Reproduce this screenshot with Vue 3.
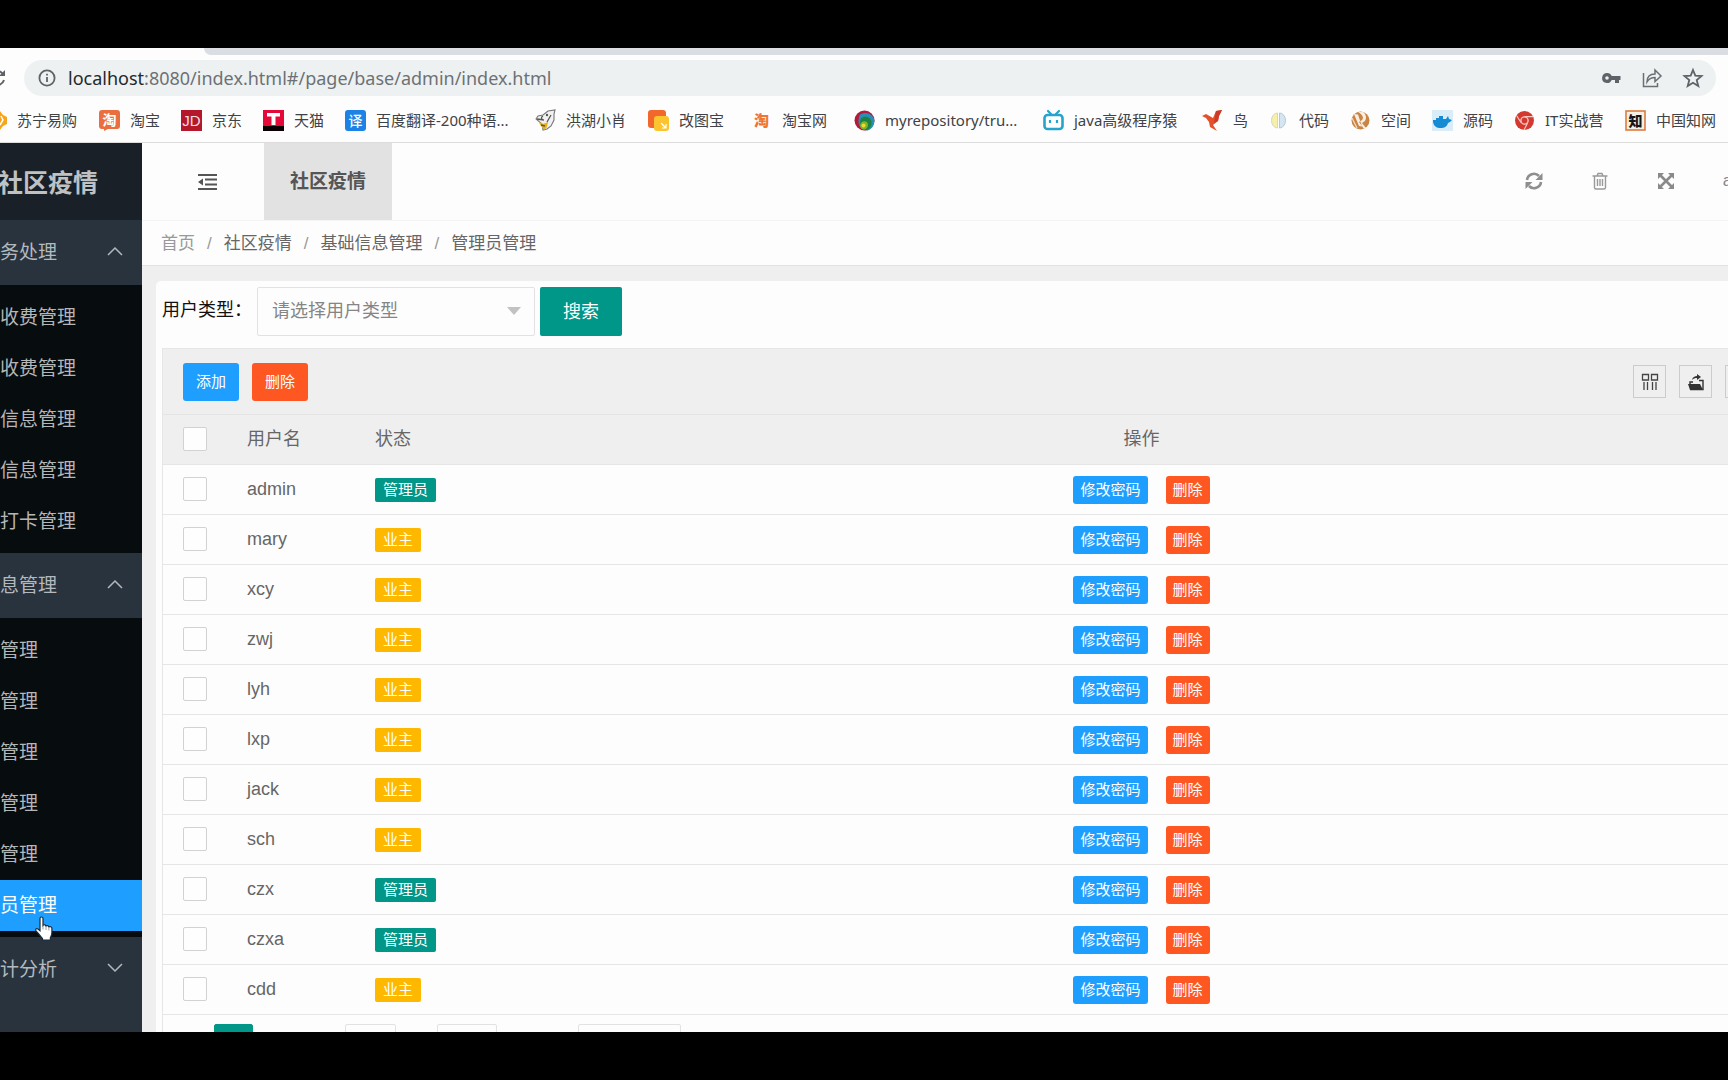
<script setup>
import { ref } from 'vue'

const cjk = 'font-family="Noto Sans CJK SC, sans-serif" text-anchor="middle"'
const latin = 'font-family="Liberation Sans, sans-serif" text-anchor="middle"'

const bookmarks = [
  {
    name: '苏宁易购',
    icon: '<path d="M10 4l4-3 3 4 4 2v7l-4 2-3 4-5-3z" fill="#f9a51a"/><path d="M15 6l2 4-3 5" fill="none" stroke="#fff" stroke-width="1.500"/>'
  },
  {
    name: '淘宝',
    icon: `<path d="M3 0h15a3 3 0 0 1 3 3v13a3 3 0 0 1-3 3h-9l-4 2v-2h-2a3 3 0 0 1-3-3v-13a3 3 0 0 1 3-3z" fill="#ea6f40"/><text x="10.5" y="14.500" font-size="14" font-weight="700" fill="#fff" ${cjk}>淘</text>`
  },
  {
    name: '京东',
    icon: `<rect width="21" height="21" fill="#b5172b"/><text x="10.5" y="16" font-size="15" fill="#f6dfe0" ${latin}>JD</text>`
  },
  {
    name: '天猫',
    icon: `<rect width="21" height="21" fill="#e5093a"/><rect y="16" width="21" height="5" fill="#0a0003"/><path d="M4 3h13v3.500h-4.500v8.500h-4v-8.500h-4.500z" fill="#fff"/>`
  },
  {
    name: '百度翻译-200种语...',
    icon: `<rect width="21" height="21" rx="3" fill="#1c82e6"/><text x="10.5" y="15.500" font-size="14" font-weight="500" fill="#fff" ${cjk}>译</text>`
  },
  {
    name: '洪湖小肖',
    icon: '<path d="M1 9l2-3 5-1 5-4 7-1-1 4v6l-3 6-4 3-4 1-1-6z" fill="#f1f1f1" stroke="#777" stroke-width="1.100"/><path d="M3 11l5 3 5-2-1 5-3 3-3-4z" fill="#e8b01c"/><path d="M2 9l7 1M8 6c-2 1-2 3 0 4M12 12l4-7M6 15l4 1" fill="none" stroke="#555" stroke-width="1.300"/><circle cx="12" cy="5" r="1.200" fill="#555"/>'
  },
  {
    name: '改图宝',
    icon: '<rect width="18" height="18" rx="3" fill="#f2672c"/><rect x="6" y="6" width="15" height="15" rx="3" fill="#fcc52f"/><path d="M13 13l5 5m0-4v4h-4" fill="none" stroke="#fff" stroke-width="1.200"/>'
  },
  {
    name: '淘宝网',
    icon: `<text x="10.5" y="15.500" font-size="15" font-weight="900" fill="#ee7630" ${cjk}>淘</text>`
  },
  {
    name: 'myrepository/tru...',
    icon: '<circle cx="10.5" cy="10.5" r="10" fill="#b8173c"/><path d="M6 4.500c6-4 14 0 14.500 6.500-.5 5-3 8.500-7 9.500-5 0-9-4-9-9 0-3 .5-5 1.500-7z" fill="#2590b8"/><path d="M7 8.500c4-4 11-1 10.500 4.500-.3 4-3 7-6 7.200-4-1-7-7-4.500-11.700z" fill="#1f8040"/><path d="M7 13c2-3 7-2 7 1.500s-2 5-4.500 5-4.500-3-2.500-6.500z" fill="#7fb52a"/><circle cx="9.500" cy="15.500" r="2" fill="#e5dc38"/>'
  },
  {
    name: 'java高级程序猿',
    icon: '<rect x="1.500" y="5" width="18" height="14" rx="3" fill="#fff" stroke="#25a4cc" stroke-width="2.600"/><path d="M5 1l3 3M16 1l-3 3" stroke="#25a4cc" stroke-width="2.200" stroke-linecap="round"/><path d="M7 10v3M14 10v3" stroke="#25a4cc" stroke-width="2.200"/>'
  },
  {
    name: '鸟',
    icon: '<path d="M0 6l4-2 7 4 3-7 6-1-3 6-1 5-5 4 4 6-7-4-1-5-3-4z" fill="#e4502c"/><path d="M14 1l6-1-3 6-1 5-4 2z" fill="#cc3a28"/>'
  },
  {
    name: '代码',
    icon: '<path d="M9.500 3a6 7.500 0 0 0 0 15z" fill="#f7f0a8" stroke="#d7d7bb"/><path d="M11.500 3a6 7.500 0 0 1 0 15z" fill="#d5e6f3" stroke="#b8c6cf"/>'
  },
  {
    name: '空间',
    icon: '<circle cx="10.5" cy="10.5" r="9" fill="#c98446"/><path d="M4 4l5 12 3 .500-4-12zM8 2h5c3 2 4 6 2 9l-3 2 4 5-2 1-5-7 3-2c2-2 1-5-4-8z" fill="#f9eee1"/><path d="M2 8l5 10" stroke="#f0dcc4" stroke-width="1.200"/>'
  },
  {
    name: '源码',
    icon: '<rect width="21" height="21" fill="#d9edf8"/><path d="M1 10h3V8h3V6h4v3h3l2-3 1 3 3 1-2 2-2 1c-1 4-4 5-7 5-5 0-7-2-8-6z" fill="#148bd2"/>'
  },
  {
    name: 'IT实战营',
    icon: '<circle cx="10.5" cy="10.5" r="9.500" fill="#d4392f"/><circle cx="10.5" cy="10.5" r="3.600" fill="#d4392f" stroke="#f3c9c4" stroke-width="1.400"/><path d="M10.500 6.700h8.500M7 12.500l-4.500-7M13.500 13l-3.500 7" stroke="#f3c9c4" stroke-width="1.200"/>'
  },
  {
    name: '中国知网',
    icon: `<rect x="1" y="1" width="19" height="19" fill="#f5efe6" stroke="#dc7c3e" stroke-width="1.600"/><text x="10.5" y="15.500" font-size="14" font-weight="900" fill="#161616" ${cjk}>知</text>`
  }
]

const groups = [
  {
    title: '务处理',
    open: true,
    items: ['收费管理', '收费管理', '信息管理', '信息管理', '打卡管理']
  },
  {
    title: '息管理',
    open: true,
    items: ['管理', '管理', '管理', '管理', '管理', '员管理']
  },
  { title: '计分析', open: false, items: [] }
]
const active = '员管理'

const crumbs = ['首页', '社区疫情', '基础信息管理', '管理员管理']

const userType = ref('')
const users = ref([
  { name: 'admin', admin: true },
  { name: 'mary', admin: false },
  { name: 'xcy', admin: false },
  { name: 'zwj', admin: false },
  { name: 'lyh', admin: false },
  { name: 'lxp', admin: false },
  { name: 'jack', admin: false },
  { name: 'sch', admin: false },
  { name: 'czx', admin: true },
  { name: 'czxa', admin: true },
  { name: 'cdd', admin: false }
])
</script>

<template>
  <div class="screen">
    <header class="browser">
      <div class="tabstrip"></div>
      <div class="toolbar">
        <button class="icon-btn reload" aria-label="重新加载">
          <svg width="18" height="18" viewBox="0 0 18 18" fill="none" stroke="#5f6368" stroke-width="2">
            <path d="M15 5a7 7 0 1 0 1 6" />
            <path d="M17 1v6h-6z" fill="#5f6368" stroke="none" />
          </svg>
        </button>
        <div class="address">
          <svg width="18" height="18" viewBox="0 0 18 18" fill="none" stroke="#5f6368" stroke-width="1.8">
            <circle cx="9" cy="9" r="7.600" />
            <path d="M9 8v5M9 4.800v1.800" />
          </svg>
          <span class="url"><b>localhost</b>:8080/index.html#/page/base/admin/index.html</span>
          <button class="icon-btn" aria-label="密码">
            <svg width="20" height="20" viewBox="0 0 20 20">
              <path
                d="M6 5a5 5 0 1 0 4.700 7h3.300v3h4v-3h1.500V8H10.700A5 5 0 0 0 6 5zm0 3.200a1.800 1.800 0 1 1 0 3.600 1.800 1.800 0 0 1 0-3.600z"
                fill="#5f6368"
                fill-rule="evenodd"
              />
            </svg>
          </button>
          <button class="icon-btn" aria-label="分享">
            <svg width="20" height="20" viewBox="0 0 20 20" fill="none" stroke="#6b6f73" stroke-width="1.500">
              <path d="M1.500 5v13.500h14V15" />
              <path d="M5 14c0-5 3-8 8-8V2l6 6-6 5.500v-4c-4 0-6 1-8 4.500z" />
            </svg>
          </button>
          <button class="icon-btn" aria-label="收藏">
            <svg width="20" height="20" viewBox="0 0 20 20" fill="none" stroke="#5f6368" stroke-width="1.800">
              <path d="M10 2l2.300 5.700 6.200.4-4.800 3.900 1.600 6L10 14.700 4.700 18l1.600-6L1.500 8.100l6.200-.4z" />
            </svg>
          </button>
        </div>
      </div>
      <nav class="bookmarks">
        <a v-for="b in bookmarks" :key="b.name" href="#">
          <svg width="21" height="21" viewBox="0 0 21 21" v-html="b.icon"></svg>
          <span>{{ b.name }}</span>
        </a>
      </nav>
    </header>

    <div class="app">
      <aside class="sidebar">
        <h1 class="logo">社区疫情</h1>
        <section v-for="g in groups" :key="g.title">
          <button class="group">
            <span>{{ g.title }}</span>
            <svg width="16" height="10" viewBox="0 0 16 10" fill="none" stroke="#b4b9be" stroke-width="1.500">
              <path :d="g.open ? 'M1 9l7-7 7 7' : 'M1 1l7 7 7-7'" />
            </svg>
          </button>
          <ul v-if="g.open">
            <li v-for="(item, i) in g.items" :key="i">
              <a href="#" :class="{ active: item === active }">{{ item }}</a>
            </li>
          </ul>
        </section>
        <svg class="pointer" width="20" height="25" viewBox="0 0 20 25">
          <path
            d="M6 2.500c0-2 3-2 3 0v7c1-1.300 2.700-.7 3 .5 1-.9 2.600-.3 2.900.9 1.200-.7 3-.1 3 1.700v4.500c0 2-.8 3-1.500 4.400V24H8.500v-1.500c-1.500-1.800-4-5-6.500-7.500-1.200-1.500.3-3 2-2l2 1.700z"
            fill="#fff"
            stroke="#1a2a38"
            stroke-width="1.200"
          />
          <path d="M9 9.500v4M12 10.500v3.500M14.900 11.500v3" stroke="#888" stroke-width=".8" />
        </svg>
      </aside>

      <main class="main">
        <div class="topbar">
          <button class="icon-btn fold" aria-label="收起菜单">
            <svg width="20" height="18" viewBox="0 0 20 18" fill="#555">
              <path d="M1 1h19v2H1zM8 5.500h12v2H8zM8 10.500h12v2H8zM1 15h19v2H1zM6 5.500v7L1 9z" />
            </svg>
          </button>
          <a class="module" href="#">社区疫情</a>
          <div class="actions">
            <button class="icon-btn" aria-label="刷新">
              <svg width="18" height="18" viewBox="0 0 18 18" fill="none" stroke="#8e8e8e" stroke-width="2.600">
                <path d="M2 8a7 7 0 0 1 12-4M16 10a7 7 0 0 1-12 4" />
                <path d="M17.500 1v7h-7zM.5 17v-7h7z" fill="#8e8e8e" stroke="none" />
              </svg>
            </button>
            <button class="icon-btn" aria-label="清理">
              <svg width="18" height="18" viewBox="0 0 18 18" fill="none" stroke="#999" stroke-width="1.400">
                <path d="M1.500 4h15M6 4l1-2.500h4l1 2.500M3.500 4v11.500q0 1.500 1.500 1.500h8q1.500 0 1.500-1.500V4M6.500 7v7M9 7v7M11.500 7v7" />
              </svg>
            </button>
            <button class="icon-btn" aria-label="全屏">
              <svg width="18" height="18" viewBox="0 0 18 18" fill="#8a8a8a">
                <path d="M1 1h6L1 7zM17 1v6l-6-6zM1 17v-6l6 6zM17 17h-6l6-6z" />
                <path d="M3 3l12 12M15 3L3 15" stroke="#8a8a8a" stroke-width="2.600" />
              </svg>
            </button>
            <a class="account" href="#">admin</a>
          </div>
        </div>

        <nav class="crumbs">
          <template v-for="(c, i) in crumbs" :key="c">
            <span v-if="i" class="sep">/</span>
            <a href="#" :class="{ home: i === 0 }">{{ c }}</a>
          </template>
        </nav>

        <div class="body">
          <div class="card">
            <form class="filter" @submit.prevent>
              <label for="user-type">用户类型：</label>
              <div class="select">
                <select id="user-type" v-model="userType">
                  <option value="">请选择用户类型</option>
                </select>
              </div>
              <button class="search" type="submit">搜索</button>
            </form>

            <div class="grid">
              <div class="tools">
                <button class="btn blue">添加</button>
                <button class="btn red">删除</button>
                <div class="right-tools">
                  <button class="tool" aria-label="筛选列">
                    <svg width="18" height="18" viewBox="0 0 18 18" fill="none" stroke="#444" stroke-width="1.300">
                      <path d="M1.500 1.500h6v5.500h-6zM10.500 1.500h6v5.500h-6zM3 9v8M6.500 9v8M11.500 9v8M15 9v8" />
                    </svg>
                  </button>
                  <button class="tool" aria-label="导出">
                    <svg width="18" height="18" viewBox="0 0 18 18">
                      <path d="M1 11h12l3 6H3z" fill="#333" />
                      <path d="M3 11V9h3M12 7.500h4v9H3" fill="none" stroke="#333" stroke-width="1.400" />
                      <path d="M5 7C5.500 4 8 3 10 3V1l4 3-4 3V5C8 5 6.500 5.500 5 7z" fill="#333" />
                    </svg>
                  </button>
                  <button class="tool" aria-label="打印"></button>
                </div>
              </div>

              <table>
                <colgroup>
                  <col class="c-check" />
                  <col class="c-name" />
                  <col class="c-state" />
                  <col />
                </colgroup>
                <thead>
                  <tr>
                    <th><input type="checkbox" aria-label="全选" /></th>
                    <th>用户名</th>
                    <th>状态</th>
                    <th class="ops">操作</th>
                  </tr>
                </thead>
                <tbody>
                  <tr v-for="u in users" :key="u.name">
                    <td><input type="checkbox" :aria-label="u.name" /></td>
                    <td>{{ u.name }}</td>
                    <td class="mid">
                      <span class="badge" :class="{ owner: !u.admin }">{{ u.admin ? '管理员' : '业主' }}</span>
                    </td>
                    <td class="ops mid">
                      <div class="row-btns">
                        <button class="btn small blue">修改密码</button>
                        <button class="btn small red">删除</button>
                      </div>
                    </td>
                  </tr>
                </tbody>
              </table>

              <div class="pager">
                <button class="current" aria-label="第一页"></button>
                <input class="jump" type="text" aria-label="页码" />
                <button class="confirm" aria-label="确定"></button>
                <select class="limit" aria-label="每页条数"></select>
              </div>
            </div>
          </div>
        </div>
      </main>
    </div>
  </div>
</template>

<style>
body {
  margin: 0;
  background: #000;
}
</style>

<style scoped>
.screen,
.screen * {
  box-sizing: border-box;
}
.screen {
  display: flex;
  flex-direction: column;
  height: calc(100vh - 96px);
  margin: 48px 0;
  overflow: hidden;
  background: #fdfdfd;
  font-family: 'Liberation Sans', 'Noto Sans CJK SC', sans-serif;
}
button,
input,
select {
  margin: 0;
  padding: 0;
  font-family: inherit;
}
a {
  color: inherit;
  text-decoration: none;
}
svg {
  display: block;
  flex: none;
  overflow: visible;
}
.icon-btn {
  display: flex;
  padding: 0;
  border: 0;
  background: none;
}

/* browser chrome */
.browser {
  flex: none;
  border-bottom: 1px solid #dcdcdc;
}
.tabstrip {
  height: 7px;
  margin-left: 204px;
  background: #dadde1;
  border-bottom-left-radius: 8px;
}
.toolbar {
  display: flex;
  align-items: center;
  gap: 18px;
  padding: 5px 12px 0 0;
}
.reload {
  margin-left: -12px;
}
.address {
  display: flex;
  flex: 1;
  align-items: center;
  gap: 21px;
  height: 36px;
  padding: 0 13px 0 14px;
  border-radius: 18px;
  background: #eef1f2;
}
.url {
  flex: 1;
  margin-left: -9px;
  color: #6d7175;
  font: 18px/36px 'Noto Sans', sans-serif;
}
.url b {
  color: #25282b;
  font-weight: 400;
}
.bookmarks {
  display: grid;
  grid-template-columns: 113px 82px 82px 82px 190px 113px 103px 103px 189px 159px 66px 82px 82px 82px 111px 103px;
  align-items: center;
  height: 46px;
  margin-left: -14px;
  padding-top: 2px;
}
.bookmarks a {
  display: flex;
  align-items: center;
  gap: 10px;
  color: #3f4246;
  font: 15px/20px 'Noto Sans', 'Noto Sans CJK SC', sans-serif;
  white-space: nowrap;
}

/* layout */
.app {
  display: flex;
  flex: 1;
  width: calc(100% + 69px);
  min-height: 0;
}
.sidebar {
  position: relative;
  flex: none;
  width: 142px;
  background: #28333e;
  color: #bdc1c5;
}
.logo {
  height: 77px;
  margin: 0;
  background: #192027;
  color: #bfc1c3;
  font-size: 25px;
  line-height: 80px;
  text-indent: -2px;
}
.group {
  display: flex;
  align-items: center;
  justify-content: space-between;
  width: 100%;
  height: 65px;
  padding: 0 19px 4px 0;
  border: 0;
  background: none;
  color: #b4b9be;
  font-size: 19px;
}
.sidebar ul {
  margin: 0;
  padding: 7px 0 6px;
  background: #070c0f;
  list-style: none;
}
.sidebar li a {
  display: block;
  height: 51px;
  color: #b5b6b7;
  font-size: 19px;
  line-height: 51px;
}
.sidebar li a.active {
  background: #1e9fff;
  color: #fff;
}
.pointer {
  position: absolute;
  left: 34px;
  top: 773px;
}
.main {
  flex: 1;
  min-width: 0;
  background: #efefef;
}
.topbar {
  display: flex;
  align-items: center;
  height: 78px;
  border-bottom: 1px solid #f4f4f4;
  background: #fdfdfd;
}
.fold {
  margin: 0 47px 0 55px;
}
.module {
  width: 128px;
  height: 77px;
  background: #e2e2e2;
  color: #555;
  font-size: 19px;
  font-weight: 700;
  line-height: 78px;
  text-align: center;
}
.actions {
  display: flex;
  align-items: center;
  gap: 48px;
  margin-left: auto;
  padding: 0 28px 2px 0;
}
.account {
  color: #888;
  font-size: 17px;
}
.crumbs {
  display: flex;
  height: 45px;
  padding-left: 19px;
  border-bottom: 1px solid #e2e2e2;
  background: #fdfdfd;
  color: #666;
  font-size: 17px;
  line-height: 46px;
}
.home,
.sep {
  color: #999;
}
.sep {
  margin: 0 12px;
}
.body {
  padding: 15px 14px;
}
.card {
  padding: 6px 7px 6px 6px;
  border-radius: 5px;
  background: #fdfdfd;
}
.filter {
  display: flex;
}
.filter label {
  width: 95px;
  color: #111;
  font-size: 18px;
  line-height: 47px;
  white-space: nowrap;
}
.select {
  position: relative;
  width: 278px;
  height: 49px;
  margin-right: 5px;
}
.select::after {
  content: '';
  position: absolute;
  top: 20px;
  right: 14px;
  border: 7px solid transparent;
  border-top: 8px solid #c2c2c2;
  border-bottom: 0;
  pointer-events: none;
}
.select select {
  width: 100%;
  height: 100%;
  padding: 0 14px 2px;
  border: 1px solid #e2e2e2;
  border-radius: 2px;
  background: #fdfdfd;
  color: #858585;
  font-size: 18px;
  appearance: none;
}
.search {
  width: 82px;
  height: 49px;
  padding-bottom: 4px;
  border: 0;
  border-radius: 2px;
  background: #009688;
  color: #fff;
  font-size: 18px;
}
.grid {
  margin-top: 12px;
  border: 1px solid #e6e6e6;
}
.tools {
  display: flex;
  align-items: center;
  gap: 13px;
  height: 66px;
  padding: 0 17px 0 20px;
  border-bottom: 1px solid #e4e4e4;
  background: #efefef;
}
.btn {
  height: 38px;
  padding: 0 13px;
  border: 0;
  border-radius: 3px;
  color: #fff;
  font-size: 15px;
  line-height: 20px;
}
.btn.small {
  height: 28px;
  padding: 0 7px;
}
.blue {
  background: #1e9fff;
}
.red {
  background: #ff5722;
}
.right-tools {
  display: flex;
  gap: 13px;
  margin-left: auto;
}
.tool {
  display: flex;
  align-items: center;
  justify-content: center;
  width: 33px;
  height: 33px;
  border: 1px solid #ccc;
  background: none;
}
table {
  width: 100%;
  border-collapse: separate;
  border-spacing: 0;
  table-layout: fixed;
  color: #666;
  font-size: 18px;
}
.c-check {
  width: 66px;
}
.c-name {
  width: 128px;
}
.c-state {
  width: 151px;
}
th,
td {
  height: 50px;
  padding: 0 18px 2px;
  border-bottom: 1px solid #e6e6e6;
  font-weight: 400;
  line-height: 24px;
  text-align: left;
}
.mid {
  padding-bottom: 0;
}
th {
  background: #efefef;
}
th:first-child,
td:first-child {
  padding: 0 0 2px 20px;
}
.ops {
  text-align: center;
}
input[type='checkbox'] {
  display: block;
  width: 24px;
  height: 24px;
  border: 1px solid #d2d2d2;
  border-radius: 2px;
  background: #fefefe;
  appearance: none;
}
.badge {
  display: block;
  width: fit-content;
  padding: 0 8px;
  border-radius: 2px;
  background: #009688;
  color: #fff;
  font-size: 15px;
}
.badge.owner {
  background: #ffb800;
}
.row-btns {
  display: flex;
  justify-content: center;
  gap: 18px;
}
.pager {
  display: flex;
  height: 45px;
  padding: 9px 0 0 51px;
}
.pager > * {
  height: 34px;
  border: 1px solid #e2e2e2;
  border-radius: 2px;
  background: #fdfdfd;
}
.pager .current {
  width: 39px;
  margin-right: 92px;
  border-color: #009688;
  background: #009688;
}
.jump {
  width: 51px;
  margin-right: 41px;
}
.confirm {
  width: 60px;
  margin-right: 81px;
}
.limit {
  width: 103px;
  appearance: none;
}
</style>
